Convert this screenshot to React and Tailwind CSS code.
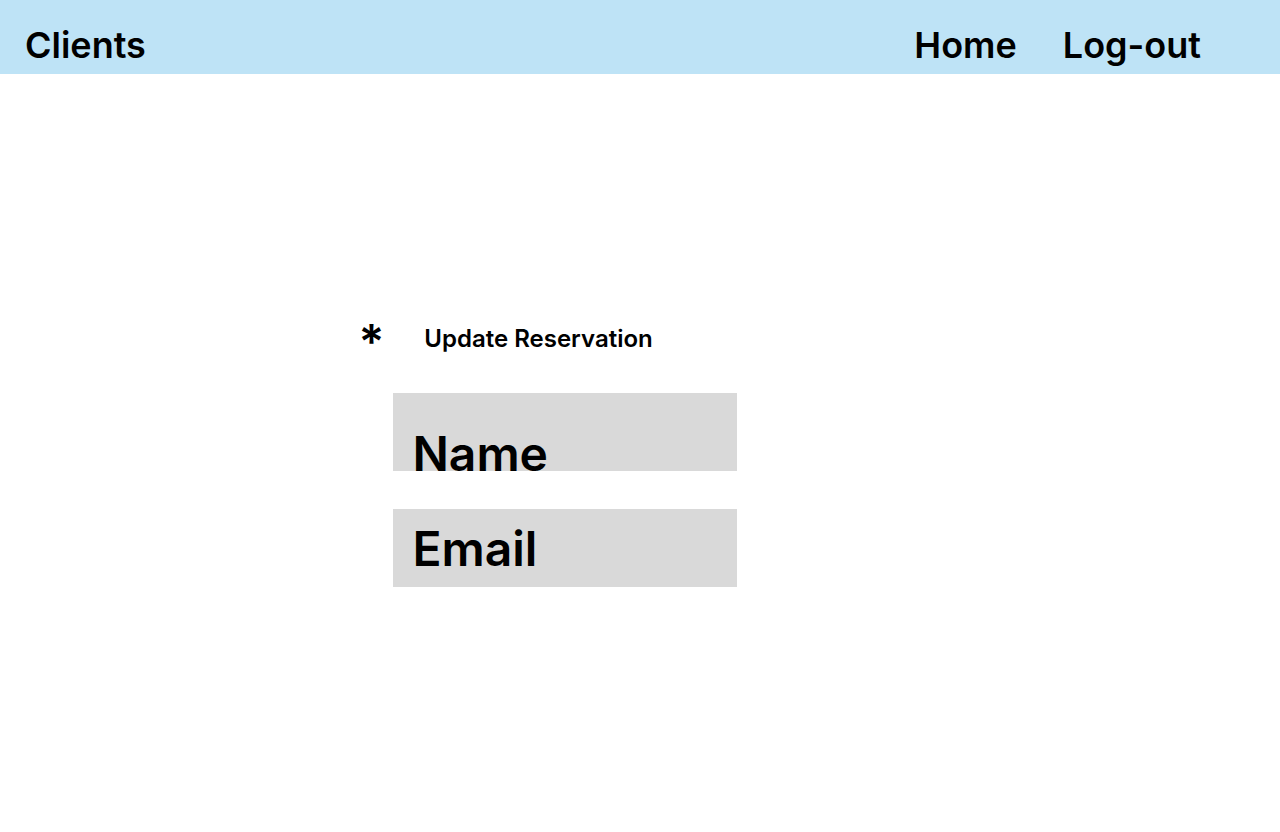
function Field({ label, name, type, spacing }) {
  return (
    <label className={"block h-[78px] bg-[#d9d9d9] px-[19px] " + spacing}>
      <input
        aria-label={label}
        name={name}
        type={type}
        placeholder={label}
        className="block h-[58px] w-full bg-transparent outline-none placeholder:text-black placeholder:opacity-100"
      />
    </label>
  );
}

export default function App() {
  return (
    <div className="min-h-screen bg-white font-['Inter',sans-serif] font-semibold text-black">
      <header className="flex h-[74px] items-center justify-between bg-[#bee3f6] pt-4 pr-[79px] pl-[25px] text-[36px] leading-[44px]">
        <h1>Clients</h1>
        <nav className="flex gap-[46px]">
          <a href="#home">Home</a>
          <a href="#logout">Log-out</a>
        </nav>
      </header>
      <main className="px-[28%] pt-[245px]">
        <div className="flex items-start gap-10">
          <span className="text-[48px] leading-[46px]">*</span>
          <h2 className="text-[24px] leading-[40px]">Update Reservation</h2>
        </div>
        <form className="mt-7 ml-[35px] flex w-[344px] flex-col gap-[38px] text-[48px] leading-[58px]">
          <Field label="Name" name="name" type="text" spacing="pt-8" />
          <Field label="Email" name="email" type="email" spacing="pt-[11px]" />
        </form>
      </main>
    </div>
  );
}
